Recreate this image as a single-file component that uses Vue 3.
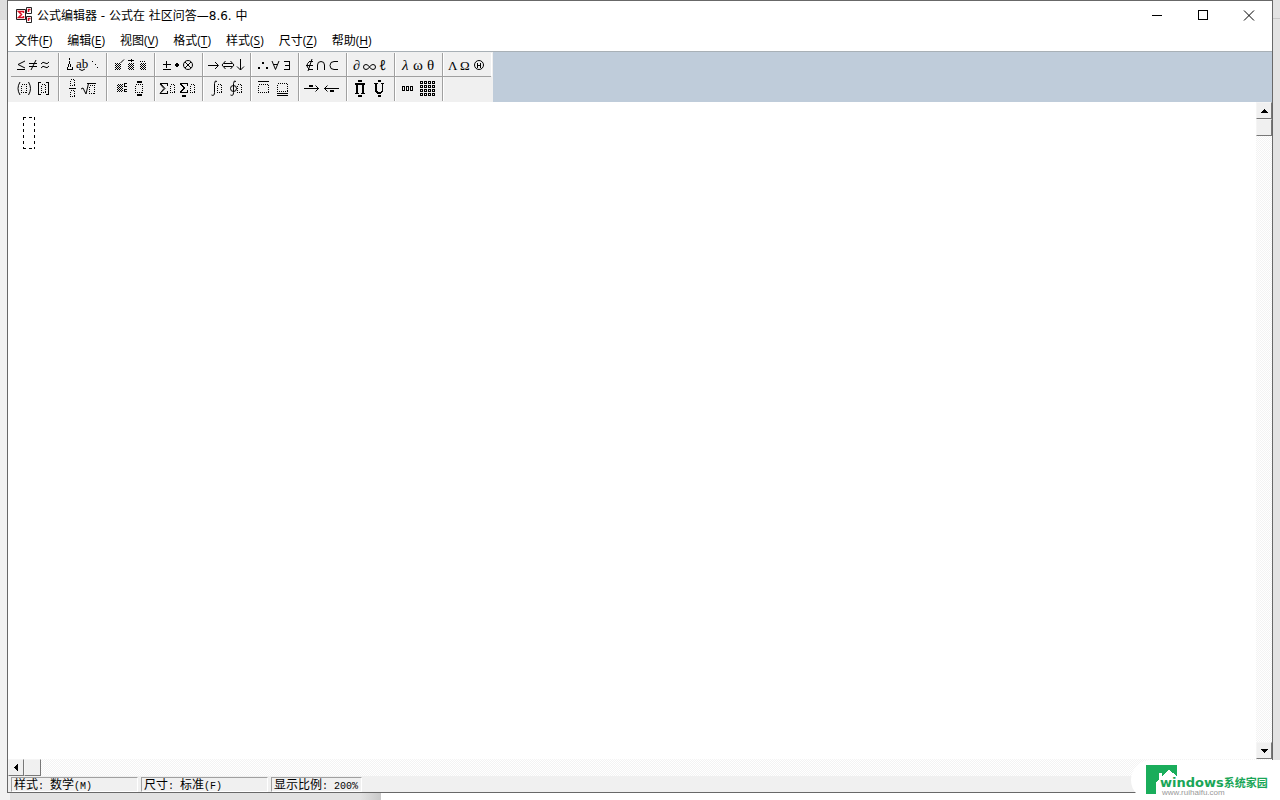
<script setup>
const menus = [
  ['文件', 'F'],
  ['编辑', 'E'],
  ['视图', 'V'],
  ['格式', 'T'],
  ['样式', 'S'],
  ['尺寸', 'Z'],
  ['帮助', 'H'],
]

const status = [
  ['样式', '数学', '(M)'],
  ['尺寸', '标准', '(F)'],
  ['显示比例', '', '200%'],
]

// line: crisp strokes, curve: smooth strokes, dots: dotted slots,
// fill: solid shapes, mesh: shaded slots, text: [x, baseline, size, string, style]
const rows = [
  [
    { label: '关系符号', curve: 'M14 8L7 11.5L14 15M30 11q2-3 4-1t4-1M30 15q2-3 4-1t4-1M25 7L20 17', line: 'M6 16.5h8M18 10.5h8M18 13.5h8' },
    { label: '间距和省略号', line: 'M10.5 5v2M10.5 8v3M9.5 11v3M11.5 11v3M8 16.5h6M8.5 14v2M13.5 14v2', curve: 'M20 16q3 3 6 0', fill: 'M33 8h1v1h-1zM36 11h1v1h-1zM38 14h1v1h-1z', text: [[17, 15, 13, 'ab', '']] },
    { label: '修饰符号', mesh: 'M8 10h6v7h-6zM21 10h6v7h-6zM33 10h6v7h-6z', curve: 'M13.5 10L17 6.500', line: 'M21 7.5h6M24.5 6v3M33 8.5h1M35 8.5h1M37 8.5h1' },
    { label: '运算符号', line: 'M11.5 8v7M8 11.5h8M8 16.5h8', fill: 'M21 10h2v1h1v2h-1v1h-2v-1h-1v-2h1z', curve: 'M28.5 12a4.500 4.500 0 1 0 9 0a4.500 4.500 0 1 0 -9 0M30 9l6 6M36 9l-6 6' },
    { label: '箭头符号', line: 'M5 12.5h10M21 10.5h8M21 13.5h8M37.5 6v11', curve: 'M12 9l3.5 3.5L12 16M22.500 8l-3.5 4L22.500 16M27.500 8l3.5 4L27.500 16M34 13.5l3.5 3.5l3.5-3.5' },
    { label: '逻辑符号', fill: 'M7 14h2v2h-2zM11 9h2v2h-2zM15 14h2v2h-2z', curve: 'M21 8l3.5 8.5L28 8M22.5 11.5h4', line: 'M33 8.5h5.5v8H33M34 12.5h4' },
    { label: '集合论符号', line: 'M14 8.5h-4M14 16.5h-4M7 12.5h7', curve: 'M10.5 8.5q-5 4 0 8M13 6L9 18M18.500 17v-5q0-3.500 3.500-3.500t3.500 3.500v5M39 8.5h-4q-4 0-4 4t4 4h4' },
    { label: '其他符号', curve: 'M22.500 14q-1.500-2.500-3.500-2.500q-2.500 0-2.500 2.500t2.500 2.500q2 0 3.500-2.500t3.500-2.500q2.500 0 2.500 2.500t-2.500 2.500q-2 0-3.500-2.500', text: [[6, 17, 14, '∂', ''], [32, 17, 14, 'ℓ', 'thin']] },
    { label: '小写希腊字母', text: [[7, 17, 15, 'λ', 'italic'], [18, 17, 15, 'ω', ''], [32, 17, 15, 'θ', '']] },
    { label: '大写希腊字母', curve: 'M31.500 12a4.500 4.500 0 1 0 9 0a4.500 4.500 0 1 0 -9 0', line: 'M34 12.5h4M34.5 10v5M37.5 10v5', text: [[5, 17, 13, 'Λ', ''], [17, 17, 13, 'Ω', '']] },
  ],
  [
    { label: '围栏模板', curve: 'M9 5q-4 6.500 0 13M17.500 5q4 6.500 0 13', dots: 'M10.5 7.5h5v8h-5z M30.5 7.5h4v8h-4z', line: 'M30 5.5h-2.5v12H30M35 5.5h2.5v12h-2.5' },
    { label: '分式和根式模板', line: 'M10 11.5h7M28 6.5h9', dots: 'M11.5 2.5h4v6h-4zM11.5 13.5h4v6h-4zM30.5 8.5h5v8h-5z', curve: 'M22 12l2-1l3 6L29.5 6.5' },
    { label: '上标和下标模板', mesh: 'M10 7h6v8h-6z', line: 'M20 6.5h-3v3h3M20 14.5h-3v-2h3', fill: 'M30 4h5v2h-5zM30 17h5v2h-5z', dots: 'M28.5 7.5h7v8h-7z' },
    { label: '求和模板', line: 'M13 6.5H5M13 16.5H5M12.5 6v3M12.5 13.5v3M33 6.5H25M33 15.5H25M32.5 6v3M32.5 13v3', curve: 'M5 7l4 4.5l-4 5M6 7l4 4.5l-4 4M25 7l4 4l-4 4M26 7l4 4l-4 4', dots: 'M15.5 7.5h4v8h-4zM35.5 7.5h4v8h-4z', fill: 'M27 18h4v2h-4z' },
    { label: '积分模板', curve: 'M14 4.5q-2-2-2.5 2v9q0 4-3 2.5M33 4.5q-2-2-2.5 2v9q0 4-3 2.5M27.5 11.5a3 3 0 1 0 6 0a3 3 0 1 0 -6 0', dots: 'M14.5 7.5h4v8h-4zM34.5 7.5h4v8h-4z' },
    { label: '底线和顶线模板', line: 'M7 4.5h11M26 16.5h11M26 18.5h11', dots: 'M7.5 7.5h10v8h-10zM26.5 6.5h10v8h-10z' },
    { label: '标签箭头模板', line: 'M5 11.5h15M25 11.5h15', curve: 'M16.5 8.5l3 3l-3 3M28.5 8.5l-3 3l3 3', fill: 'M10 8h4v2h-4zM31 13h4v2h-4z' },
    { label: '乘积和集合论模板', fill: 'M8 6h10v2h-1v8h1v1h-4v-1h1V8h-4v8h1v1H8v-1h1V8H8zM11 3h4v2h-4zM11 18h4v2h-4zM27 6h4v1h-1v7h1v1h3v-1h1V7h-1V6h3v1h-1v8h-1v1h-1v1h-4v-1h-1v-1h-1V7h-1zM31 3h3v2h-3zM31 18h3v2h-3z' },
    { label: '矩阵模板', line: 'M7.5 9.5h2v4h-2zM11.5 9.5h2v4h-2zM15.5 9.5h2v4h-2z M25.5 4.5h2v2h-2zM29.5 4.5h2v2h-2zM33.5 4.5h2v2h-2zM37.5 4.5h2v2h-2zM25.5 8.5h2v2h-2zM29.5 8.5h2v2h-2zM33.5 8.5h2v2h-2zM37.5 8.5h2v2h-2zM25.5 12.5h2v2h-2zM29.5 12.5h2v2h-2zM33.5 12.5h2v2h-2zM37.5 12.5h2v2h-2zM25.5 16.5h2v2h-2zM29.5 16.5h2v2h-2zM33.5 16.5h2v2h-2zM37.5 16.5h2v2h-2z' },
  ],
]
</script>

<template>
  <div class="desktop">
    <main class="window">
      <header class="titlebar">
        <svg class="logo" width="18" height="18" viewBox="0 0 18 18" aria-hidden="true">
          <path d="M1.5 2.5h9v10h-9zM11.5 .5h5v6h-5zM11.5 9.5h5v6h-5z" fill="#fff" stroke="#222" />
          <path d="M8.500 6V4.500H3.500l3 3l-3 3h5V9M13.500 5V2.500h2M13.500 14v-2.500h2" fill="none" stroke="#d80f22" stroke-width="1.500" />
        </svg>
        <h1>公式编辑器 - 公式在 社区问答—8.6. 中</h1>
        <div class="controls">
          <button aria-label="最小化"><svg width="12" height="12"><path d="M1 5.500h10" /></svg></button>
          <button aria-label="最大化"><svg width="12" height="12"><path d="M1.500 .500h9v9h-9z" /></svg></button>
          <button aria-label="关闭"><svg class="smooth" width="12" height="12"><path d="M1 .500l10 10M11 .500L1 10.500" /></svg></button>
        </div>
      </header>

      <nav class="menubar">
        <button v-for="[name, key] in menus" :key="key">{{ name }}(<u>{{ key }}</u>)</button>
      </nav>

      <section class="toolbar">
        <svg class="defs" width="0" height="0" aria-hidden="true">
          <defs>
            <pattern id="mesh" width="2" height="2" patternUnits="userSpaceOnUse">
              <path d="M0 0h1v1H0zM1 1h1v1H1z" fill="#000" />
            </pattern>
          </defs>
        </svg>
        <div class="palette">
          <div v-for="(row, r) in rows" :key="r" class="row">
            <button v-for="icon in row" :key="icon.label" :aria-label="icon.label">
              <svg width="46" height="22" viewBox="0 0 46 22">
                <path v-if="icon.mesh" :d="icon.mesh" fill="url(#mesh)" />
                <path v-if="icon.dots" class="dots" :d="icon.dots" />
                <path v-if="icon.line" class="line" :d="icon.line" />
                <path v-if="icon.curve" class="curve" :d="icon.curve" />
                <path v-if="icon.fill" :d="icon.fill" />
                <text v-for="t in icon.text" :key="t[3]" :x="t[0]" :y="t[1]" :font-size="t[2]" :class="t[4]">{{ t[3] }}</text>
              </svg>
            </button>
          </div>
        </div>
      </section>

      <section class="work">
        <div class="canvas">
          <svg class="slot" width="12" height="32" aria-label="公式占位框">
            <path d="M0 .5h12M0 31.500h12M.5 0v32M11.500 0v32" />
          </svg>
        </div>
        <div class="vbar">
          <button aria-label="向上滚动"><svg width="7" height="4"><path d="M3 0h1v1h1v1h1v1h1v1H0V3h1V2h1V1h1z" /></svg></button>
          <button aria-label="垂直滑块"></button>
          <button class="end" aria-label="向下滚动"><svg width="7" height="4"><path d="M0 0h7v1H6v1H5v1H4v1H3V3H2V2H1V1H0z" /></svg></button>
        </div>
      </section>

      <div class="hbar">
        <button aria-label="向左滚动"><svg width="4" height="7"><path d="M0 3h1V2h1V1h1V0h1v7H3V6H2V5H1V4H0z" /></svg></button>
        <button aria-label="水平滑块"></button>
      </div>

      <footer class="status">
        <div v-for="[name, value, latin] in status" :key="name">
          {{ name }}<span class="half">:&nbsp;</span>{{ value }}<span class="half">{{ latin }}</span>
        </div>
      </footer>
    </main>

    <aside class="brand">
      <svg width="31" height="29" viewBox="0 0 31 29" aria-hidden="true">
        <path d="M0 0h31v11L23 5l-7 6V8h-3v6l-3 3v12H0z" fill="#1aad5b" />
      </svg>
      <div class="words">
        <strong>windows<span>系统家园</span></strong>
        <small>www.ruihaifu.com</small>
      </div>
    </aside>
  </div>
</template>

<style>
body {
  margin: 0;
  background: #f0f0f0;
}
</style>

<style scoped>
* {
  box-sizing: border-box;
}
.desktop {
  position: relative;
  display: flex;
  height: 100vh;
  padding: 0 7px 7px;
  overflow: hidden;
  background:
    linear-gradient(90deg, #e2e2e2 350px, #c8c8c8) 10px 100% / 371px 7px no-repeat,
    linear-gradient(#dedede, #dedede) 0 0 / 7px 20px no-repeat,
    linear-gradient(#c8c8c8, #c8c8c8) 100% 18px / 7px 1px no-repeat,
    linear-gradient(#e3e3e3, #e3e3e3) 100% 0 / 7px 100% no-repeat,
    linear-gradient(#fff, #fff) 100% 100% / calc(100% - 10px) 7px no-repeat,
    #f2f2f2;
  color: #000;
  font-family: "Open Sans", "Noto Sans CJK SC", sans-serif;
  font-size: 12px;
}
button {
  padding: 0;
  border: 0;
  background: none;
  color: inherit;
  font: inherit;
}
svg {
  display: block;
  shape-rendering: crispEdges;
}
.window {
  display: flex;
  flex: 1;
  flex-direction: column;
  min-width: 0;
  border: 1px solid #686868;
  background: #fff;
}
.titlebar {
  display: flex;
  align-items: center;
  height: 30px;
  padding-left: 7px;
}
.logo {
  shape-rendering: auto;
}
h1 {
  flex: 1;
  margin: 0 0 0 4px;
  font-family: "DejaVu Sans", "Noto Sans CJK SC", sans-serif;
  font-size: 12px;
  font-weight: 400;
  line-height: 18px;
  white-space: nowrap;
}
.controls {
  display: flex;
}
.controls button {
  display: grid;
  place-items: center;
  width: 46px;
  height: 30px;
}
.controls path {
  fill: none;
  stroke: #000;
}
.controls .smooth {
  shape-rendering: auto;
}
.menubar {
  display: flex;
  gap: 15px;
  height: 20px;
  padding-left: 7px;
}
.menubar button {
  line-height: 20px;
  white-space: nowrap;
}
.menubar u {
  text-underline-offset: 2px;
}
.toolbar {
  border-top: 1px solid #a8b0b6;
  background: #bfccda;
}
.defs {
  position: absolute;
}
.palette {
  width: 485px;
  height: 50px;
  padding: 1px 2px 0 3px;
  background: #f0f0f0;
}
.row {
  display: flex;
  height: 24px;
}
.row:first-child {
  border-bottom: 1px solid #a0a0a0;
}
.row button {
  display: flex;
  align-items: flex-start;
  width: 48px;
  border-right: 1px solid #a0a0a0;
  box-shadow: 1px 0 #fff;
}
.row:first-child button:last-child {
  border-right-color: #f0f0f0;
}
.line,
.dots,
.curve {
  fill: none;
  stroke: #000;
}
.dots {
  stroke-dasharray: 1 1;
}
.curve {
  shape-rendering: auto;
}
text {
  font-family: "Liberation Serif", "DejaVu Serif", serif;
}
.italic {
  font-style: italic;
}
.thin {
  font-family: "Noto Sans", sans-serif;
}
.work {
  display: flex;
  flex: 1;
  min-height: 0;
}
.canvas {
  flex: 1;
  padding: 15px;
}
.slot path {
  fill: none;
  stroke: #000;
  stroke-dasharray: 3 3;
}
.vbar,
.hbar {
  display: flex;
  background: repeating-conic-gradient(#fff 0 25%, #f3f3f3 0 50%) 0 0 / 2px 2px;
}
.vbar {
  flex-direction: column;
  width: 16px;
}
.vbar button,
.hbar button {
  display: grid;
  place-items: center;
  width: 16px;
  height: 17px;
  border: 1px solid;
  border-color: #f5f5f5 #777 #777 #f5f5f5;
  background: #f0f0f0;
}
.hbar {
  height: 17px;
}
.hbar button + button {
  width: 17px;
}
.vbar .end {
  margin-top: auto;
}
.status {
  display: flex;
  gap: 3px;
  height: 16px;
  padding: 1px 3px 0;
  background: #f0f0f0;
}
.status div {
  width: 127px;
  padding-left: 2px;
  border: 1px solid;
  border-color: #a0a0a0 #fff #fff #a0a0a0;
  line-height: 14px;
  white-space: nowrap;
}
.status div:last-child {
  width: 91px;
}
.half {
  font-family: "Liberation Mono", monospace;
  font-size: 10px;
}
.brand {
  position: absolute;
  right: 0;
  bottom: 0;
  display: flex;
  width: 149px;
  height: 40px;
  padding: 5px 0 0 15px;
  border-radius: 20px 0 0 20px;
  background: #fff;
}
.words {
  position: absolute;
  top: 16px;
  left: 29px;
  white-space: nowrap;
}
strong {
  display: block;
  color: #1aa657;
  font-family: "DejaVu Sans", sans-serif;
  font-size: 13px;
  line-height: 13px;
}
strong span {
  font-family: "Noto Sans CJK SC", sans-serif;
  font-size: 11px;
}
small {
  display: block;
  margin-left: 2px;
  color: #999;
  font-family: "Liberation Sans", sans-serif;
  font-size: 8px;
  line-height: 8px;
}
</style>
